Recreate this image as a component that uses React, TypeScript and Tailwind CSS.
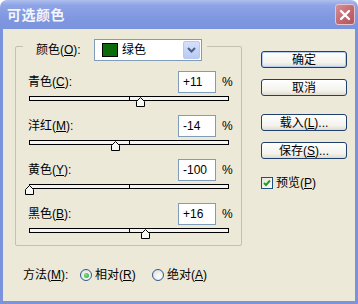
import React from "react";

function Thumb({ value }: { value: number }) {
  return (
    <svg
      width="9"
      height="10"
      viewBox="0 0 9 10"
      className="absolute top-[0px]"
      style={{ left: 95 + value }}
    >
      <polygon
        points="0.5,4.5 4.5,0.5 8.5,4.5 8.5,9.5 0.5,9.5"
        fill="#f7f7f4"
        stroke="#000"
        strokeWidth="1"
      />
    </svg>
  );
}

function SliderRow({
  name,
  k,
  text,
  value,
}: {
  name: string;
  k: string;
  text: string;
  value: number;
}) {
  return (
    <div className="flex flex-col gap-[3px]">
      <div className="flex items-center h-[22px]">
        <span className="w-[150px] text-[12px] leading-none">
          {name}(<u>{k}</u>):
        </span>
        <div className="w-[38px] h-[22px] border border-[#7f9db9] bg-white flex items-center pl-[4px] text-[12px] leading-none">
          {text}
        </div>
        <span className="ml-[6px] text-[12px] leading-none">%</span>
      </div>
      <div className="relative ml-[1px] w-[200px] h-[5px] border border-black bg-[#f6f5f0]">
        <div className="absolute left-[99px] top-0 bottom-0 w-px bg-black" />
        <Thumb value={value} />
      </div>
    </div>
  );
}

function XPButton({ children, primary }: { children: React.ReactNode; primary?: boolean }) {
  return (
    <div
      className={
        "w-[86px] h-[17px] rounded-[3px] border border-[#1f3f6e] flex items-center justify-center text-[12px] leading-none bg-[linear-gradient(#ffffff,#f3f2ec_70%,#dedcd0)] " +
        (primary ? "shadow-[inset_0_0_0_1px_#b7ccf3]" : "")
      }
    >
      {children}
    </div>
  );
}

function Radio({ checked }: { checked?: boolean }) {
  return (
    <div className="w-[12px] h-[12px] rounded-full border border-[#2c5a8c] bg-[radial-gradient(circle_at_65%_65%,#ffffff,#dcdad2)] flex items-center justify-center">
      {checked && (
        <div className="w-[5px] h-[5px] rounded-full bg-[radial-gradient(circle_at_40%_40%,#8be08b,#21a121)]" />
      )}
    </div>
  );
}

export default function App() {
  return (
    <div className="w-[358px] h-[304px] flex flex-col [font-family:'Liberation_Sans','Noto_Sans_CJK_SC',sans-serif] text-black">
      {/* Title bar */}
      <div className="h-[29px] rounded-t-[7px] flex items-center justify-between pl-[7px] pr-[3px] bg-[linear-gradient(#aebfee,#8ea4e5_18%,#8098e0_60%,#7b93dd)]">
        <span className="text-[14px] font-bold text-[#f4f6fd] leading-none tracking-[0.5px]">
          可选颜色
        </span>
        <div className="w-[20px] h-[21px] rounded-[3px] border border-[#e6c6cc] bg-[linear-gradient(135deg,#d69198,#c0656f_60%,#b05761)] flex items-center justify-center">
          <svg width="12" height="12" viewBox="0 0 12 12">
            <path d="M2 2 L10 10 M10 2 L2 10" stroke="#ffffff" strokeWidth="2.4" strokeLinecap="round" />
          </svg>
        </div>
      </div>

      {/* Body */}
      <div className="flex-1 bg-[#ece9d8] border-l-[3px] border-r-[3px] border-b-[3px] border-[#7b92dc] flex flex-col">
        <div className="flex items-start pl-[12px]">
          {/* Group box */}
          <div className="mt-[17px] w-[227px] border border-[#c4c1b0] rounded-[2px] flex flex-col pb-[12px]">
            <div className="mt-[-8px] ml-[7px] self-start bg-[#ece9d8] pl-[13px] pr-[5px] flex items-center">
              <span className="w-[58px] text-[12px] leading-none">
                颜色(<u>O</u>):
              </span>
              <div className="w-[108px] h-[22px] border border-[#7f9db9] bg-white flex items-center pl-[7px] pr-[1px]">
                <div className="w-[16px] h-[14px] border border-black bg-[#0b6b0b]" />
                <span className="ml-[4px] text-[12px] leading-none flex-1">绿色</span>
                <div className="w-[17px] h-[18px] rounded-[2px] border border-[#b9c9ef] bg-[linear-gradient(#d4e0fb,#b9cbf4)] flex items-center justify-center">
                  <svg width="9" height="6" viewBox="0 0 9 6">
                    <path d="M1 1 L4.5 4.5 L8 1" stroke="#4d6185" strokeWidth="2" fill="none" />
                  </svg>
                </div>
              </div>
            </div>
            <div className="mt-[10px] pl-[12px] flex flex-col gap-[14px]">
              <SliderRow name="青色" k="C" text="+11" value={11} />
              <SliderRow name="洋红" k="M" text="-14" value={-14} />
              <SliderRow name="黄色" k="Y" text="-100" value={-100} />
              <SliderRow name="黑色" k="B" text="+16" value={16} />
            </div>
          </div>

          {/* Right column */}
          <div className="ml-[19px] mt-[22px] flex flex-col">
            <XPButton primary>确定</XPButton>
            <div className="mt-[11px]">
              <XPButton>取消</XPButton>
            </div>
            <div className="mt-[18px]">
              <XPButton>
                载入(<u>L</u>)...
              </XPButton>
            </div>
            <div className="mt-[11px]">
              <XPButton>
                保存(<u>S</u>)...
              </XPButton>
            </div>
            <div className="mt-[18px] flex items-center">
              <div className="w-[12px] h-[12px] border border-[#1c5180] bg-[linear-gradient(135deg,#e6e4dc,#ffffff)] flex items-center justify-center">
                <svg width="8" height="8" viewBox="0 0 8 8">
                  <path d="M1 4 L3 6 L7 1.5" stroke="#21a121" strokeWidth="2" fill="none" />
                </svg>
              </div>
              <span className="ml-[3px] text-[12px] leading-none">
                预览(<u>P</u>)
              </span>
            </div>
          </div>
        </div>

        {/* Method row */}
        <div className="mt-[21px] ml-[20px] flex items-center h-[16px]">
          <span className="w-[57px] text-[12px] leading-none">
            方法(<u>M</u>):
          </span>
          <div className="w-[72px] flex items-center">
            <Radio checked />
            <span className="ml-[3px] text-[12px] leading-none">
              相对(<u>R</u>)
            </span>
          </div>
          <div className="flex items-center">
            <Radio />
            <span className="ml-[3px] text-[12px] leading-none">
              绝对(<u>A</u>)
            </span>
          </div>
        </div>
      </div>
    </div>
  );
}
